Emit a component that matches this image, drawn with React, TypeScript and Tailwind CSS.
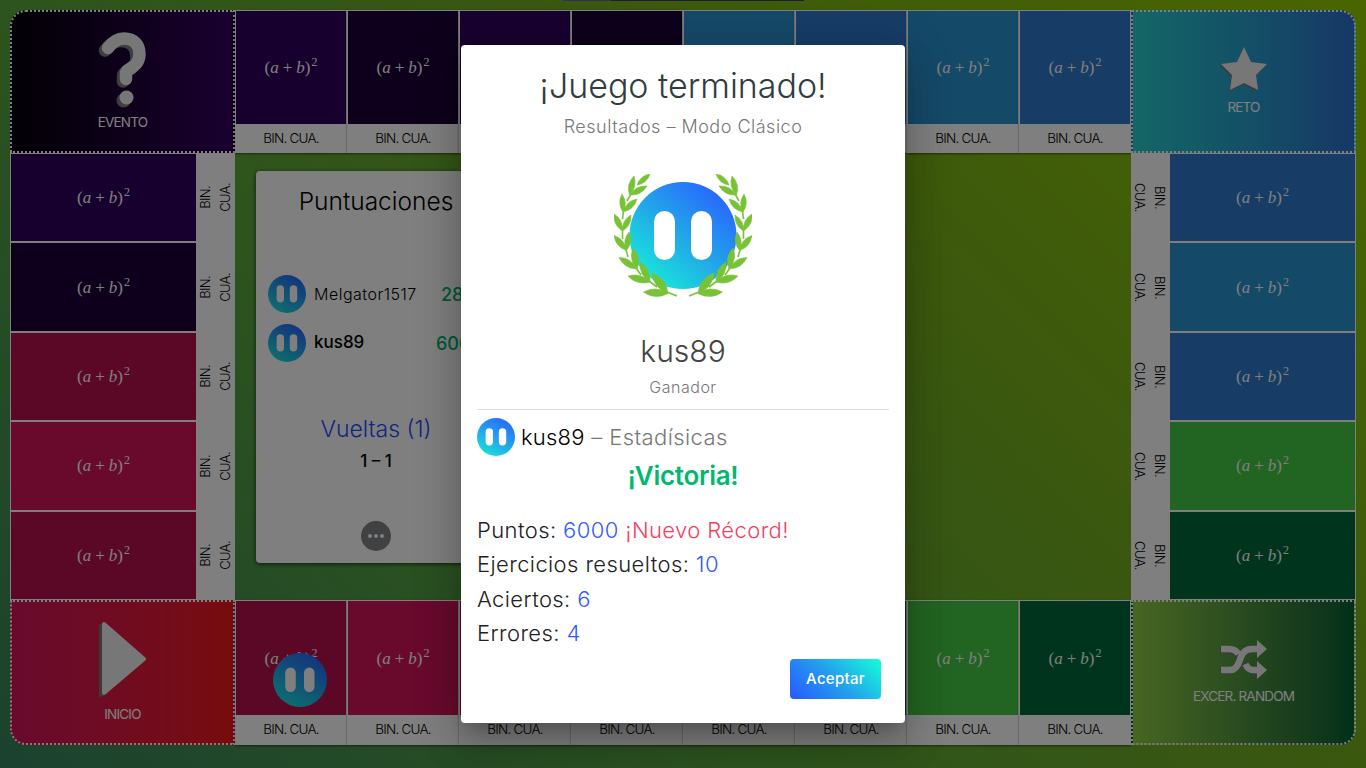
import { type ReactNode } from "react";

function Face({ className }: { className: string }) {
  return (
    <span className={`flex shrink-0 items-center justify-center rounded-full bg-linear-[30deg,#14f0d8_0%,#24a0ec_50%,#285aff_100%] ${className}`}>
      <svg viewBox="0 0 108 108" className="size-full" fill="#fff">
        <rect x="24.500" y="29" width="21" height="49" rx="10.500" />
        <rect x="62" y="29" width="21" height="49" rx="10.500" />
      </svg>
    </span>
  );
}

function Formula() {
  return (
    <span className="flex items-baseline whitespace-pre font-['Liberation_Serif',serif] text-[17px] leading-none text-white">
      <span>(</span><i>a</i><span className="mx-[4px]">+</span><i>b</i><span>)</span>
      <sup className="relative -top-[7px] ml-px text-[12px] leading-none">2</sup>
    </span>
  );
}

function Column({ color, bottom = false }: { color: string; bottom?: boolean }) {
  return (
    <div className="flex flex-1 flex-col bg-white shadow-[0_1px_2px_rgba(0,0,0,0.5)]">
      <div className={`flex flex-1 items-center justify-center border border-b-0 border-white ${color}`}><Formula /></div>
      <div className={`flex items-center justify-center pb-px text-[13.500px] font-light tracking-[-0.8px] text-black ${bottom ? "h-[30px]" : "h-[29px]"}`}>BIN. CUA.</div>
    </div>
  );
}

function Row({ color, right = false }: { color: string; right?: boolean }) {
  return (
    <div className={`flex flex-1 ${right ? "flex-row-reverse" : ""}`}>
      <div className={`flex flex-1 items-center justify-center border border-white ${color}`}><Formula /></div>
      <div className={`flex w-[38px] items-center justify-center bg-white ${right ? "" : "pr-0.5"}`}>
        <div className={`text-center text-[13px] font-light leading-5 tracking-[-0.6px] text-black [writing-mode:vertical-rl] ${right ? "" : "rotate-180"}`}>BIN.<br />CUA.</div>
      </div>
    </div>
  );
}

function Corner({ className, label, children }: { className: string; label: string; children: ReactNode }) {
  return (
    <div className={`flex w-[225px] shrink-0 flex-col items-center justify-center border-2 border-dotted border-white text-[13.500px] leading-5 tracking-[-0.8px] text-white ${className}`}>
      {children}
      <span>{label}</span>
    </div>
  );
}

function Question() {
  const d = "M10 17Q17 7.500 26 7.500C36 7.500 41.500 14 41.500 23C41.500 32 36 35.500 31.500 38Q28 40 28 43V48";
  return (
    <svg width="50" height="78" viewBox="0 0 50 78" fill="none" strokeWidth="12.500" strokeLinecap="round" strokeLinejoin="round" className="mb-[3px]">
      <g stroke="#7d7d7d" transform="translate(-3 2.500)"><path d={d} /><path d="M28.500 67h.01" strokeWidth="14" /></g>
      <g stroke="#eee"><path d={d} /><path d="M28.500 66.500h.01" strokeWidth="14" /></g>
    </svg>
  );
}

function Play() {
  return (
    <svg width="50" height="78" viewBox="0 0 50 78" strokeWidth="4" strokeLinejoin="round" className="mb-[5px]">
      <path d="M3 5V74L44 39Z" fill="#777" stroke="#777" />
      <path d="M6 3V72L46 38Z" fill="#eee" stroke="#eee" />
    </svg>
  );
}

function Star() {
  const p = "24,1 31,16 47,18 36,29 38,44 24,37 10,44 12,29 1,18 17,16";
  return (
    <svg width="48" height="48" viewBox="0 0 48 48" className="mb-[3px]">
      <polygon points={p} fill="#777" transform="translate(-1 1.500)" />
      <polygon points={p} fill="#eee" />
    </svg>
  );
}

function Shuffle() {
  return (
    <svg width="48" height="40" viewBox="0 0 48 40" className="mb-[6px]">
      {["#777", "#eee"].map((c, i) => (
        <g key={c} transform={i ? undefined : "translate(-1 1)"}>
          <path d="M1 9H9Q15 9 18.500 14M25.500 24Q28 30 33 30H38M1 30H10Q17 30 20 19.500Q23 9 32 9H38" fill="none" stroke={c} strokeWidth="6.500" />
          <path d="M37 0L47 9L37 18ZM37 21L47 30L37 39Z" fill={c} />
        </g>
      ))}
    </svg>
  );
}

const leaves: [number, number, number, number][] = [
  [36, 0, 23, 11], [20, 2, 15.5, 21], [33, 12, 16, 21], [8, 20, 9, 38], [23, 25, 9, 38],
  [0, 40, 8.5, 57], [17, 41, 8.5, 57], [0, 61.5, 12.5, 76.5], [15, 58, 12.5, 76.5],
  [5, 83.500, 23, 95], [19, 74, 23, 95], [14, 102, 36, 108], [26, 88, 36, 108],
  [29.500, 118, 54, 119.500], [38, 99, 54, 119.500],
];

function Branch() {
  return (
    <g fill="#78c238" stroke="#78c238">
      {leaves.map(([x, y, u, v]) => {
        const a = (u - x) * 0.31;
        const b = (v - y) * 0.31;
        const mx = (x + u) / 2;
        const my = (y + v) / 2;
        return <path key={`${x}-${y}`} strokeWidth=".6" d={`M${x} ${y}Q${mx - b} ${my + a} ${u} ${v}Q${mx + b} ${my - a} ${x} ${y}`} />;
      })}
      <path d="M17 20L13 27M9.500 37L8.500 45M8.500 56V65M12 76L14 83M22 94L27 101M35 107L43 113M53 118L63 122" fill="none" strokeWidth="1.600" />
    </g>
  );
}

function WinnerBadge() {
  return (
    <svg width="138" height="124" viewBox="0 0 138 124">
      <defs>
        <linearGradient id="face" x1=".15" y1=".9" x2=".85" y2=".1">
          <stop stopColor="#18e8da" /><stop offset=".5" stopColor="#22a5e9" /><stop offset="1" stopColor="#2866ff" />
        </linearGradient>
      </defs>
      <circle cx="69" cy="61.500" r="53.500" fill="url(#face)" />
      <rect x="40" y="37" width="21" height="49" rx="10.500" fill="#fff" />
      <rect x="77" y="37" width="21" height="49" rx="10.500" fill="#fff" />
      <Branch />
      <g transform="translate(138 0) scale(-1 1)"><Branch /></g>
    </svg>
  );
}

const purple = "bg-[#30005c]";
const night = "bg-[#1c0038]";
const crimson = "bg-[#b4104c]";
const rose = "bg-[#d2155a]";
const sky = "bg-[#2a92d0]";
const blue = "bg-[#2e78cc]";
const green = "bg-[#44c842]";
const forest = "bg-[#006838]";

export default function App() {
  return (
    <div className="relative h-[768px] w-[1366px] overflow-hidden bg-linear-[45deg,#36845f_0%,#5ba83c_36%,#76b01e_64%,#94cc00_100%] p-[10px] font-['Inter',sans-serif]">
      <div className="flex h-[735px] flex-col">
        <div className="flex h-[143px]">
          <Corner label="EVENTO" className="rounded-tl-2xl bg-linear-to-r from-[#06000c] to-[#350061]"><Question /></Corner>
          {[purple, night, purple, night, sky, blue, sky, blue].map((c, i) => <Column key={i} color={c} />)}
          <Corner label="RETO" className="rounded-tr-2xl bg-linear-to-r from-[#28cfcb] to-[#2d70cc]"><Star /></Corner>
        </div>
        <div className="flex h-[447px]">
          <div className="flex w-[225px] flex-col">
            {[purple, night, crimson, rose, crimson].map((c, i) => <Row key={i} color={c} />)}
          </div>
          <div className="flex-1 px-[21px] pt-[18px]">
            <div className="flex h-[392px] w-[240px] flex-col items-center rounded bg-white px-3 shadow-[0_1px_4px_rgba(0,0,0,0.7)]">
              <h2 className="mt-[12px] text-[24.500px] font-light leading-9 text-black">Puntuaciones</h2>
              <div className="mt-[55px] flex h-10 w-full items-center"><Face className="size-[38px]" /><span className="ml-2 flex-1 text-[16px] font-light tracking-[0.5px] text-black">Melgator1517</span><span className="w-[43px] text-[18px] font-medium text-[#00b070]">2800</span></div>
              <div className="mt-[9px] flex h-10 w-full items-center"><Face className="size-[38px]" /><span className="ml-2 flex-1 text-[17px] font-medium text-black">kus89</span><span className="w-[48px] text-[18px] font-medium text-[#00b070]">6000</span></div>
              <div className="mt-[46px] text-[23px] font-light leading-10 text-[#284bff]">Vueltas (1)</div>
              <div className="text-[17px] font-medium leading-6 text-black">1 – 1</div>
              <div className="mt-[48px] flex size-[30px] items-center justify-center gap-[2px] rounded-full bg-[#808285]"><i className="size-1 rounded-full bg-white" /><i className="size-1 rounded-full bg-white" /><i className="size-1 rounded-full bg-white" /></div>
            </div>
          </div>
          <div className="flex w-[225px] flex-col">
            {[blue, sky, blue, green, forest].map((c, i) => <Row key={i} color={c} right />)}
          </div>
        </div>
        <div className="flex h-[145px]">
          <Corner label="INICIO" className="rounded-bl-2xl bg-linear-to-r from-[#d2155a] to-[#f01818]"><Play /></Corner>
          {[crimson, rose, crimson, rose, green, forest, green, forest].map((c, i) => <Column key={i} color={c} bottom />)}
          <Corner label="EXCER. RANDOM" className="rounded-br-2xl bg-linear-to-r from-[#8fcc44] to-[#006034]"><Shuffle /></Corner>
        </div>
      </div>
      <Face className="absolute left-[273px] top-[653px] size-[54px]" />
      <div className="absolute left-[563px] top-0 flex h-px w-[241px] bg-[#3a3a5c]"><span className="w-[48px] bg-[#6064a8]" /></div>

      <div className="absolute inset-0 flex items-start justify-center bg-black/50 pt-[45px]">
        <section className="flex h-[678px] w-[444px] flex-col rounded bg-white px-4 shadow-[0_11px_15px_-7px_rgba(0,0,0,0.2),0_24px_38px_3px_rgba(0,0,0,0.14),0_9px_46px_8px_rgba(0,0,0,0.12)]">
          <header className="flex flex-col items-center">
            <h1 className="mt-[18px] text-[34px] font-light leading-[46px] text-[#2f3d3f]">¡Juego terminado!</h1>
            <p className="mt-[4px] text-[18px] font-light leading-7 tracking-[0.500px] text-[#777]">Resultados – Modo Clásico</p>
            <div className="mt-[33px] h-[124px]"><WinnerBadge /></div>
            <p className="mt-[30px] text-[30px] font-light leading-[46px] text-[#444]">kus89</p>
            <p className="mt-px text-[16px] font-light leading-6 tracking-[0.500px] text-[#777]">Ganador</p>
          </header>
          <div className="mt-[10px] border-t border-[#ddd]" />
          <div className="mt-[8px] flex h-[38px] items-center"><Face className="size-[38px]" /><span className="ml-[6px] text-[22px] font-light tracking-[0.400px] text-[#777]"><span className="tracking-[0.200px] text-black">kus89</span> – Estadísicas</span></div>
          <strong className="text-center text-[26px] font-semibold leading-[40px] tracking-[-0.300px] text-[#00b870]">¡Victoria!</strong>
          <div className="mt-[17px] text-[22px] font-light leading-[34.300px] tracking-[0.400px] text-[#202124]">
            <p>Puntos: <span className="text-[#2e5bff]">6000</span> <span className="text-[#f43f5e]">¡Nuevo Récord!</span></p>
            <p>Ejercicios resueltos: <span className="text-[#2e5bff]">10</span></p>
            <p>Aciertos: <span className="text-[#2e5bff]">6</span></p>
            <p>Errores: <span className="text-[#2e5bff]">4</span></p>
          </div>
          <button className="mr-2 mt-[9px] h-10 w-[91px] self-end rounded bg-linear-[45deg,#2857ff,#24a0ed_50%,#15ffda] text-[15px] font-medium tracking-[0.300px] text-white">Aceptar</button>
        </section>
      </div>
    </div>
  );
}
